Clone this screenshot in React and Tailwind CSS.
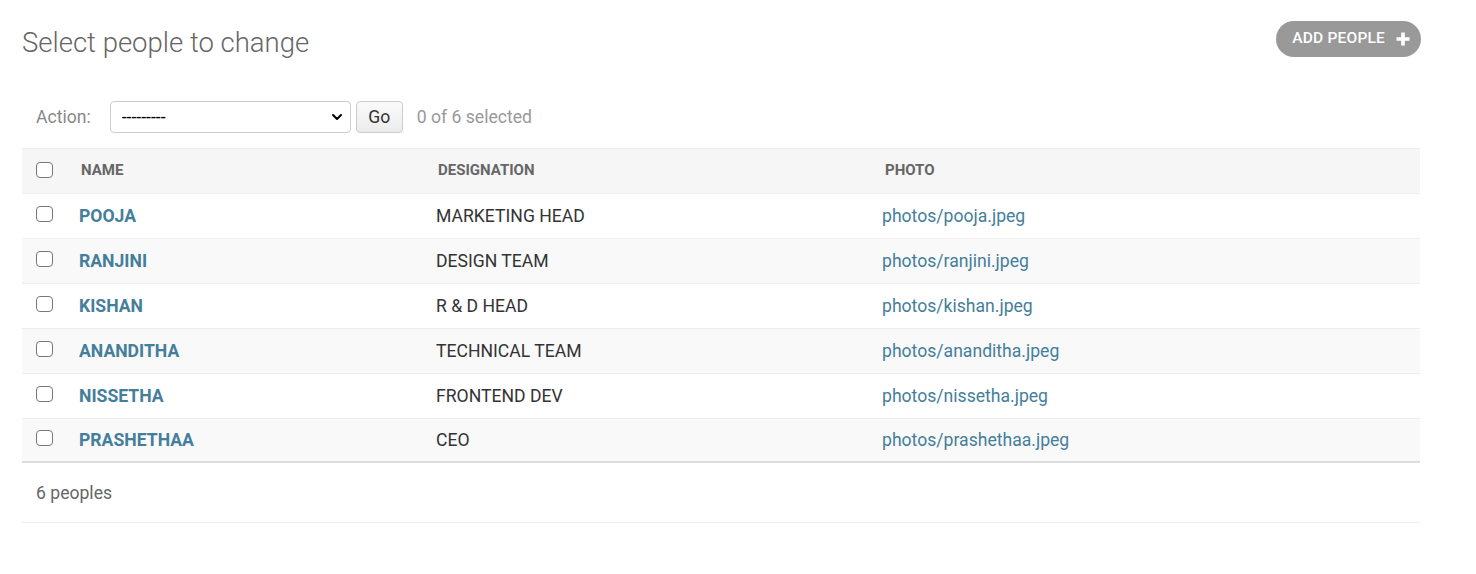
import { ChevronDown } from 'lucide-react';

const people = [
  { name: 'POOJA', designation: 'MARKETING HEAD', photo: 'photos/pooja.jpeg' },
  { name: 'RANJINI', designation: 'DESIGN TEAM', photo: 'photos/ranjini.jpeg' },
  { name: 'KISHAN', designation: 'R & D HEAD', photo: 'photos/kishan.jpeg' },
  { name: 'ANANDITHA', designation: 'TECHNICAL TEAM', photo: 'photos/ananditha.jpeg' },
  { name: 'NISSETHA', designation: 'FRONTEND DEV', photo: 'photos/nissetha.jpeg' },
  { name: 'PRASHETHAA', designation: 'CEO', photo: 'photos/prashethaa.jpeg' },
];

const cols = 'grid grid-cols-[49px_357px_446px_1fr]';

function Box() {
  return <span className="block w-[17px] h-[16px] mb-[5px] rounded-[4px] border border-[#777] bg-white" />;
}

export default function App() {
  return (
    <div className="min-h-screen bg-white font-['Roboto',sans-serif] pl-[22px] pr-[56px] pt-[21px]">
      <div className="flex items-center justify-between h-[36px]">
        <h1 className="text-[27.5px] font-light text-[#666] leading-none mt-[8px]">Select people to change</h1>
        <button className="-mr-[1px] h-[36px] pl-[16px] pr-[11px] rounded-full bg-[#999] text-white text-[15.5px] font-medium tracking-[0.2px] flex items-center gap-[11px]">
          ADD PEOPLE
          <svg width="14" height="14" viewBox="0 0 14 14"><path d="M7 0.5v13M0.5 7h13" stroke="white" strokeWidth="3.6" /></svg>
        </button>
      </div>

      <div className="flex items-center mt-[44px] h-[32px] text-[17.6px]">
        <span className="ml-[14px] text-[#888]">Action:</span>
        <div className="relative ml-[19px]">
          <select className="appearance-none w-[241px] h-[32px] border border-[#ccc] rounded-[4px] bg-white pl-[11px] text-[17.6px] text-black">
            <option>---------</option>
          </select>
          <ChevronDown className="absolute right-[6px] top-[8px] w-[16px] h-[16px] text-black" strokeWidth={3} />
        </div>
        <button className="ml-[5px] w-[47px] h-[32px] border border-[#ccc] rounded-[4px] bg-gradient-to-b from-[#fafafa] to-[#ececec] text-[#333]">Go</button>
        <span className="ml-[14px] text-[#999]">0 of 6 selected</span>
      </div>

      <div className="mt-[15px]">
        <div className={`${cols} h-[45px] items-center bg-[#f6f6f6] border-t border-[#eee] text-[15px] font-bold text-[#666]`}>
          <div className="pl-[14px] pt-[3px]"><Box /></div>
          <div className="pl-[10px] pb-[2px]">NAME</div>
          <div className="pl-[10px] pb-[2px]">DESIGNATION</div>
          <div className="pl-[11px] pb-[2px]">PHOTO</div>
        </div>
        {people.map((p, i) => (
          <div
            key={p.name}
            className={`${cols} h-[45px] items-center text-[17.6px] border-t border-[#eee] ${i % 2 ? 'bg-[#f9f9f9]' : 'bg-white'} ${i === people.length - 1 ? 'border-b-2 border-b-[#ddd]' : ''}`}
          >
            <div className="pl-[14px]"><Box /></div>
            <div className="pl-[8px] font-bold text-[#447e9b]">{p.name}</div>
            <div className="pl-[8px] text-[#333]">{p.designation}</div>
            <div className="pl-[8px] text-[#447e9b]">{p.photo}</div>
          </div>
        ))}
        <div className="h-[60px] flex items-center pl-[14px] pt-[2px] text-[17.6px] text-[#666] border-b border-[#eee]">6 peoples</div>
      </div>
    </div>
  );
}
